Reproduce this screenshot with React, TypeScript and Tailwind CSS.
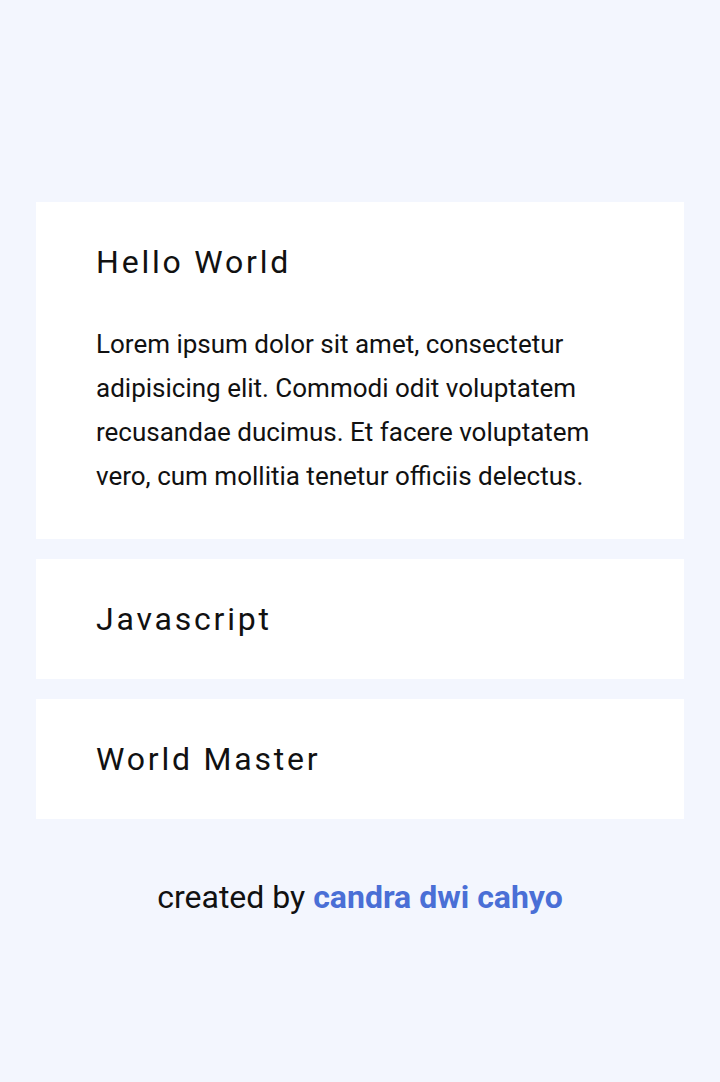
const Card = ({ title, children }: { title: string; children?: React.ReactNode }) => (
  <div className="bg-white px-[60px] py-[36px]">
    <h2 className="text-[32px] leading-[48px] tracking-[2.8px] text-[#111]">{title}</h2>
    {children}
  </div>
);

export default function App() {
  return (
    <div className="min-h-[1082px] bg-[#f3f6fe] font-['Roboto',sans-serif] px-[36px] pt-[202px]">
      <div className="flex flex-col gap-[20px]">
        <Card title="Hello World">
          <p className="mt-[36px] mb-[5px] text-[26px] leading-[44px] text-[#111]">
            Lorem ipsum dolor sit amet, consectetur adipisicing elit. Commodi odit voluptatem recusandae ducimus. Et
            facere voluptatem vero, cum mollitia tenetur officiis delectus.
          </p>
        </Card>
        <Card title="Javascript" />
        <Card title="World Master" />
      </div>
      <p className="mt-[54px] text-center text-[32px] leading-[48px] text-[#111]">
        created by <span className="font-bold text-[#4a6fd6]">candra dwi cahyo</span>
      </p>
    </div>
  );
}
